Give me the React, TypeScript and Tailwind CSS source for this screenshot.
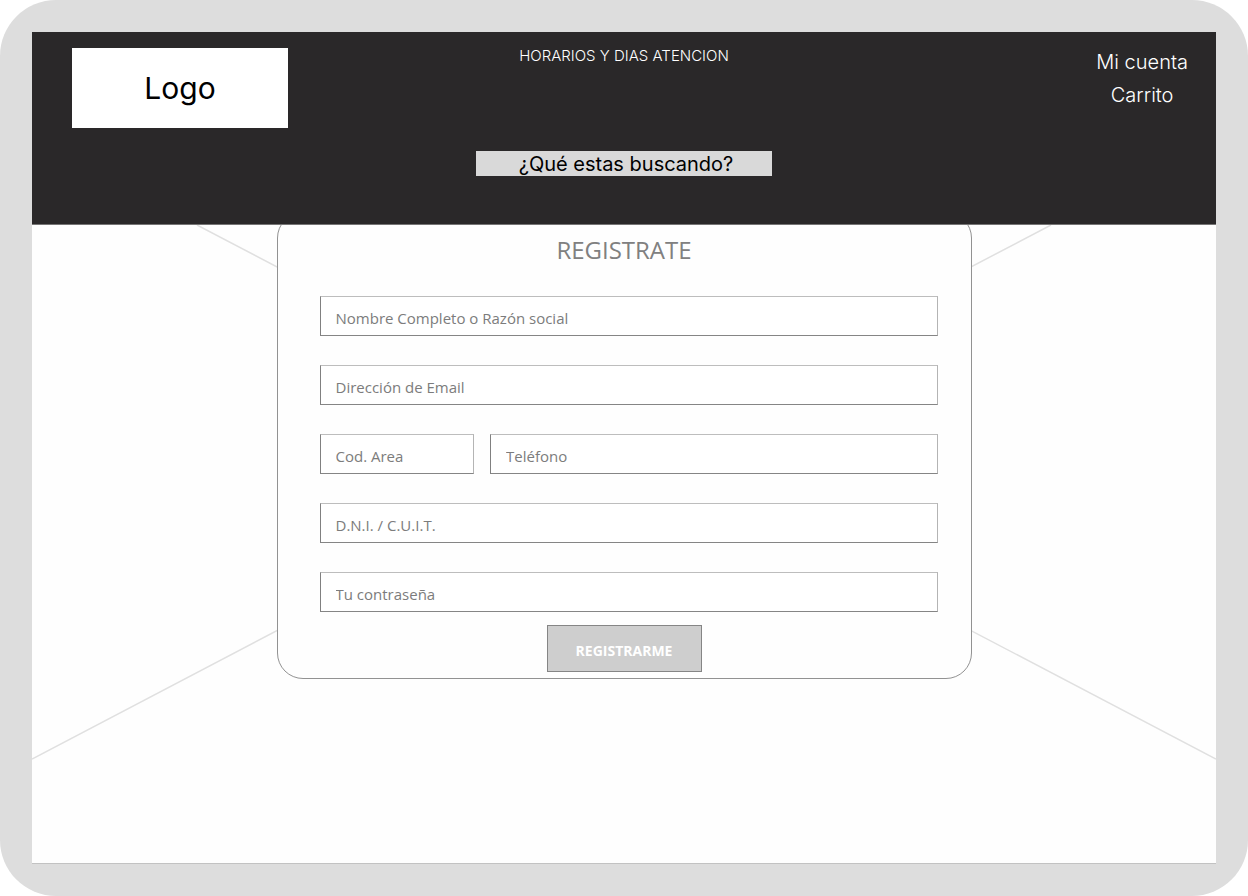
import type { InputHTMLAttributes } from "react";

type FieldProps = InputHTMLAttributes<HTMLInputElement> & {
  label: string;
  wrapperClass?: string;
};

function Field({ id, label, wrapperClass = "w-full", ...rest }: FieldProps) {
  return (
    <div className={wrapperClass}>
      <input
        id={id}
        name={id}
        aria-label={label}
        placeholder={label}
        className="block h-10 w-full border border-t-[#bdbdbd] border-r-[#b4b4b4] border-b-[#858585] border-l-[#808080] bg-white px-[15px] pt-1 text-[15px] text-[#555555] outline-none placeholder:text-[#7c7c7c]"
        {...rest}
      />
    </div>
  );
}

function Header() {
  return (
    <header className="relative z-10 grid min-h-[193px] grid-cols-[1fr_auto_1fr] border-b border-[#767575] bg-[#2a2829] font-['Inter',sans-serif]">
      <div className="pt-4 pl-10">
        <a
          href="#inicio"
          className="flex h-20 w-[216px] items-center justify-center bg-white text-[30px] text-black"
        >
          Logo
        </a>
      </div>
      <div className="flex flex-col items-center justify-between pt-3 pb-12">
        <p className="text-[15px] leading-6 font-light text-white">HORARIOS Y DIAS ATENCION</p>
        <form role="search">
          <input
            id="buscar"
            type="text"
            aria-label="Buscar"
            placeholder="¿Qué estas buscando?"
            className="block h-[25px] w-[296px] bg-[#d9d9d9] pl-1 text-center text-[20px] text-black outline-none placeholder:text-black"
          />
        </form>
      </div>
      <nav className="flex flex-col items-center justify-self-end pt-[14px] pr-7 text-[20px] leading-[33px] font-light text-white">
        <a href="#cuenta">Mi cuenta</a>
        <a href="#carrito">Carrito</a>
      </nav>
    </header>
  );
}

function Backdrop() {
  return (
    <svg
      aria-hidden="true"
      className="absolute inset-0 h-full w-full"
      viewBox="0 0 1184 638"
      preserveAspectRatio="none"
      fill="none"
      stroke="#e0e0e0"
      strokeWidth="1.5"
    >
      <path d="M165 0L1184 534M1019 0L0 534" />
    </svg>
  );
}

export default function App() {
  return (
    <div className="min-h-screen bg-white">
      <div className="flex min-h-screen flex-col rounded-[56px] bg-[#dddddd] p-8">
        <Header />
        <main className="relative flex-1 border-b border-[#c2c2c2] bg-[#fefefe] font-['Open_Sans','Noto_Sans',sans-serif]">
          <Backdrop />
          <form className="relative mx-auto -mt-[13px] w-full max-w-[695px] rounded-[26px] border border-[#929292] bg-[#fefefe] pt-[18px] pb-[6px]">
            <h1 className="text-center text-[24px] leading-[38px] text-[#808080]">REGISTRATE</h1>
            <div className="mt-[27px] flex flex-col gap-[29px] pr-[33px] pl-[42px]">
              <Field id="nombre" label="Nombre Completo o Razón social" />
              <Field id="email" type="email" label="Dirección de Email" />
              <div className="flex gap-4">
                <Field id="area" label="Cod. Area" wrapperClass="w-1/4" />
                <Field id="telefono" type="tel" label="Teléfono" wrapperClass="flex-1" />
              </div>
              <Field id="documento" label="D.N.I. / C.U.I.T." />
              <Field id="clave" type="password" label="Tu contraseña" />
            </div>
            <button
              type="button"
              className="mx-auto mt-[13px] block h-[47px] w-[155px] border border-[#858585] bg-[#cecece] pt-1 text-[14px] font-bold text-white"
            >
              REGISTRARME
            </button>
          </form>
        </main>
      </div>
    </div>
  );
}
